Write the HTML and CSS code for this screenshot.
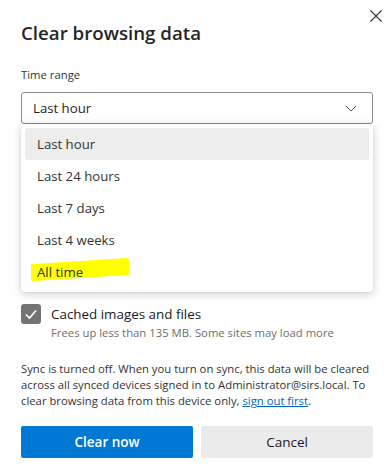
FILE: index.html
```html
<!DOCTYPE html>
<html lang="en">
<head>
    <meta charset="UTF-8">
    <meta name="viewport" content="width=device-width, initial-scale=1.0">
    <title>Clear browsing data</title>
    <link rel="stylesheet" href="styles.css">
</head>
<body>
    <div class="dialog">
        <button class="close-btn" aria-label="Close">
            <svg width="12" height="12" viewBox="0 0 12 12">
                <path d="M0.5 0.5 L11.5 11.5 M11.5 0.5 L0.5 11.5" stroke="#333" stroke-width="1.1" fill="none"/>
            </svg>
        </button>

        <h1>Clear browsing data</h1>

        <div class="field-label">Time range</div>
        <div class="select-wrap">
            <div class="select">
                <span>Last hour</span>
                <svg class="chevron" width="12" height="7" viewBox="0 0 12 7">
                    <path d="M1 1 L6 6 L11 1" stroke="#555" stroke-width="1" fill="none"/>
                </svg>
            </div>
            <ul class="menu">
                <li class="menu-item selected">Last hour</li>
                <li class="menu-item">Last 24 hours</li>
                <li class="menu-item">Last 7 days</li>
                <li class="menu-item">Last 4 weeks</li>
                <li class="menu-item marked">
                    <svg class="marker" width="100" height="24" viewBox="0 0 100 24">
                        <path d="M1 7 Q1 6 3 6 L97 0 Q99 0 99 2 L99 16 Q99 17 97 17 L3 23 Q1 23 1 21 Z" fill="#ffff00"/>
                    </svg>
                    <span>All time</span>
                </li>
            </ul>
        </div>

        <div class="options">
            <label class="option">
                <span class="checkbox">
                    <svg width="14" height="14" viewBox="0 0 14 14">
                        <path d="M2 7.5 L5.5 11 L12 3.5" stroke="#fff" stroke-width="1.6" fill="none"/>
                    </svg>
                </span>
                <span class="option-text">
                    <span class="option-title">Cached images and files</span>
                    <span class="option-desc">Frees up less than 135 MB. Some sites may load more</span>
                </span>
            </label>
        </div>

        <p class="sync-note">Sync is turned off. When you turn on sync, this data will be cleared across all synced devices signed in to Administrator@sirs.local. To clear browsing data from this device only, <a href="#">sign out first</a>.</p>

        <div class="actions">
            <button class="btn btn-primary">Clear now</button>
            <button class="btn btn-secondary">Cancel</button>
        </div>
    </div>
</body>
</html>
```

FILE: styles.css
```css
:root {
    --primary-color: #0078d4;
    --link-color: #0067b8;
    --text-color: #1a1a1a;
    --muted-color: #6e6e6e;
    --gray-100: #ebebeb;
    --gray-200: #ededed;
}

body {
    font-family: 'Open Sans', 'Noto Sans', sans-serif;
    margin: 0;
    background-color: white;
    color: var(--text-color);
}

.dialog {
    position: relative;
    width: 352px;
    padding: 19px 19px 0 21px;
}

.close-btn {
    position: absolute;
    top: 9px;
    right: 9px;
    width: 14px;
    height: 14px;
    padding: 1px;
    border: none;
    background: none;
    display: flex;
}

h1 {
    margin: 0;
    font-size: 18.7px;
    line-height: 28px;
    font-weight: 600;
    color: #262626;
}

.field-label {
    margin-top: 20px;
    font-size: 11.3px;
    line-height: 16px;
    color: #333;
}

.select-wrap {
    position: relative;
    margin-top: 9px;
}

.select {
    height: 30px;
    border: 1px solid #8c8c8c;
    border-radius: 3px;
    display: flex;
    align-items: center;
    justify-content: space-between;
    padding: 0 15px 0 11px;
    font-size: 13.2px;
    color: #262626;
}

.menu {
    position: absolute;
    top: 32px;
    left: 0;
    right: 0;
    margin: 0;
    padding: 4px;
    list-style: none;
    background-color: white;
    border-radius: 4px;
    box-shadow: 0 2px 8px rgba(0,0,0,0.2), 0 0 2px rgba(0,0,0,0.08);
    z-index: 2;
}

.menu-item {
    position: relative;
    height: 32px;
    display: flex;
    align-items: center;
    padding-left: 12px;
    font-size: 13.2px;
    color: #333;
    border-radius: 3px;
}

.menu-item.selected {
    background-color: var(--gray-200);
}

.menu-item span {
    position: relative;
}

.marker {
    position: absolute;
    left: 5px;
    top: 2px;
}

.options {
    margin-top: 180px;
}

.option {
    display: flex;
    gap: 10px;
}

.checkbox {
    width: 20px;
    height: 20px;
    flex: none;
    border-radius: 3px;
    background-color: #737373;
    display: flex;
    align-items: center;
    justify-content: center;
}

.option-text {
    display: flex;
    flex-direction: column;
}

.option-title {
    font-size: 13.4px;
    line-height: 20px;
    font-weight: 500;
}

.option-desc {
    margin-top: 1px;
    font-size: 11.3px;
    line-height: 16px;
    color: var(--muted-color);
}

.sync-note {
    margin: 20px 0 0;
    font-size: 11.3px;
    line-height: 16px;
    color: #333;
}

.sync-note a {
    color: var(--link-color);
}

.actions {
    display: flex;
    gap: 8px;
    margin-top: 17px;
}

.btn {
    flex: 1;
    height: 32px;
    border: none;
    border-radius: 2px;
    font-family: inherit;
    font-size: 13.5px;
    font-weight: 600;
}

.btn-primary {
    background-color: var(--primary-color);
    color: white;
}

.btn-secondary {
    background-color: var(--gray-100);
    color: var(--text-color);
    font-weight: 500;
}
```
